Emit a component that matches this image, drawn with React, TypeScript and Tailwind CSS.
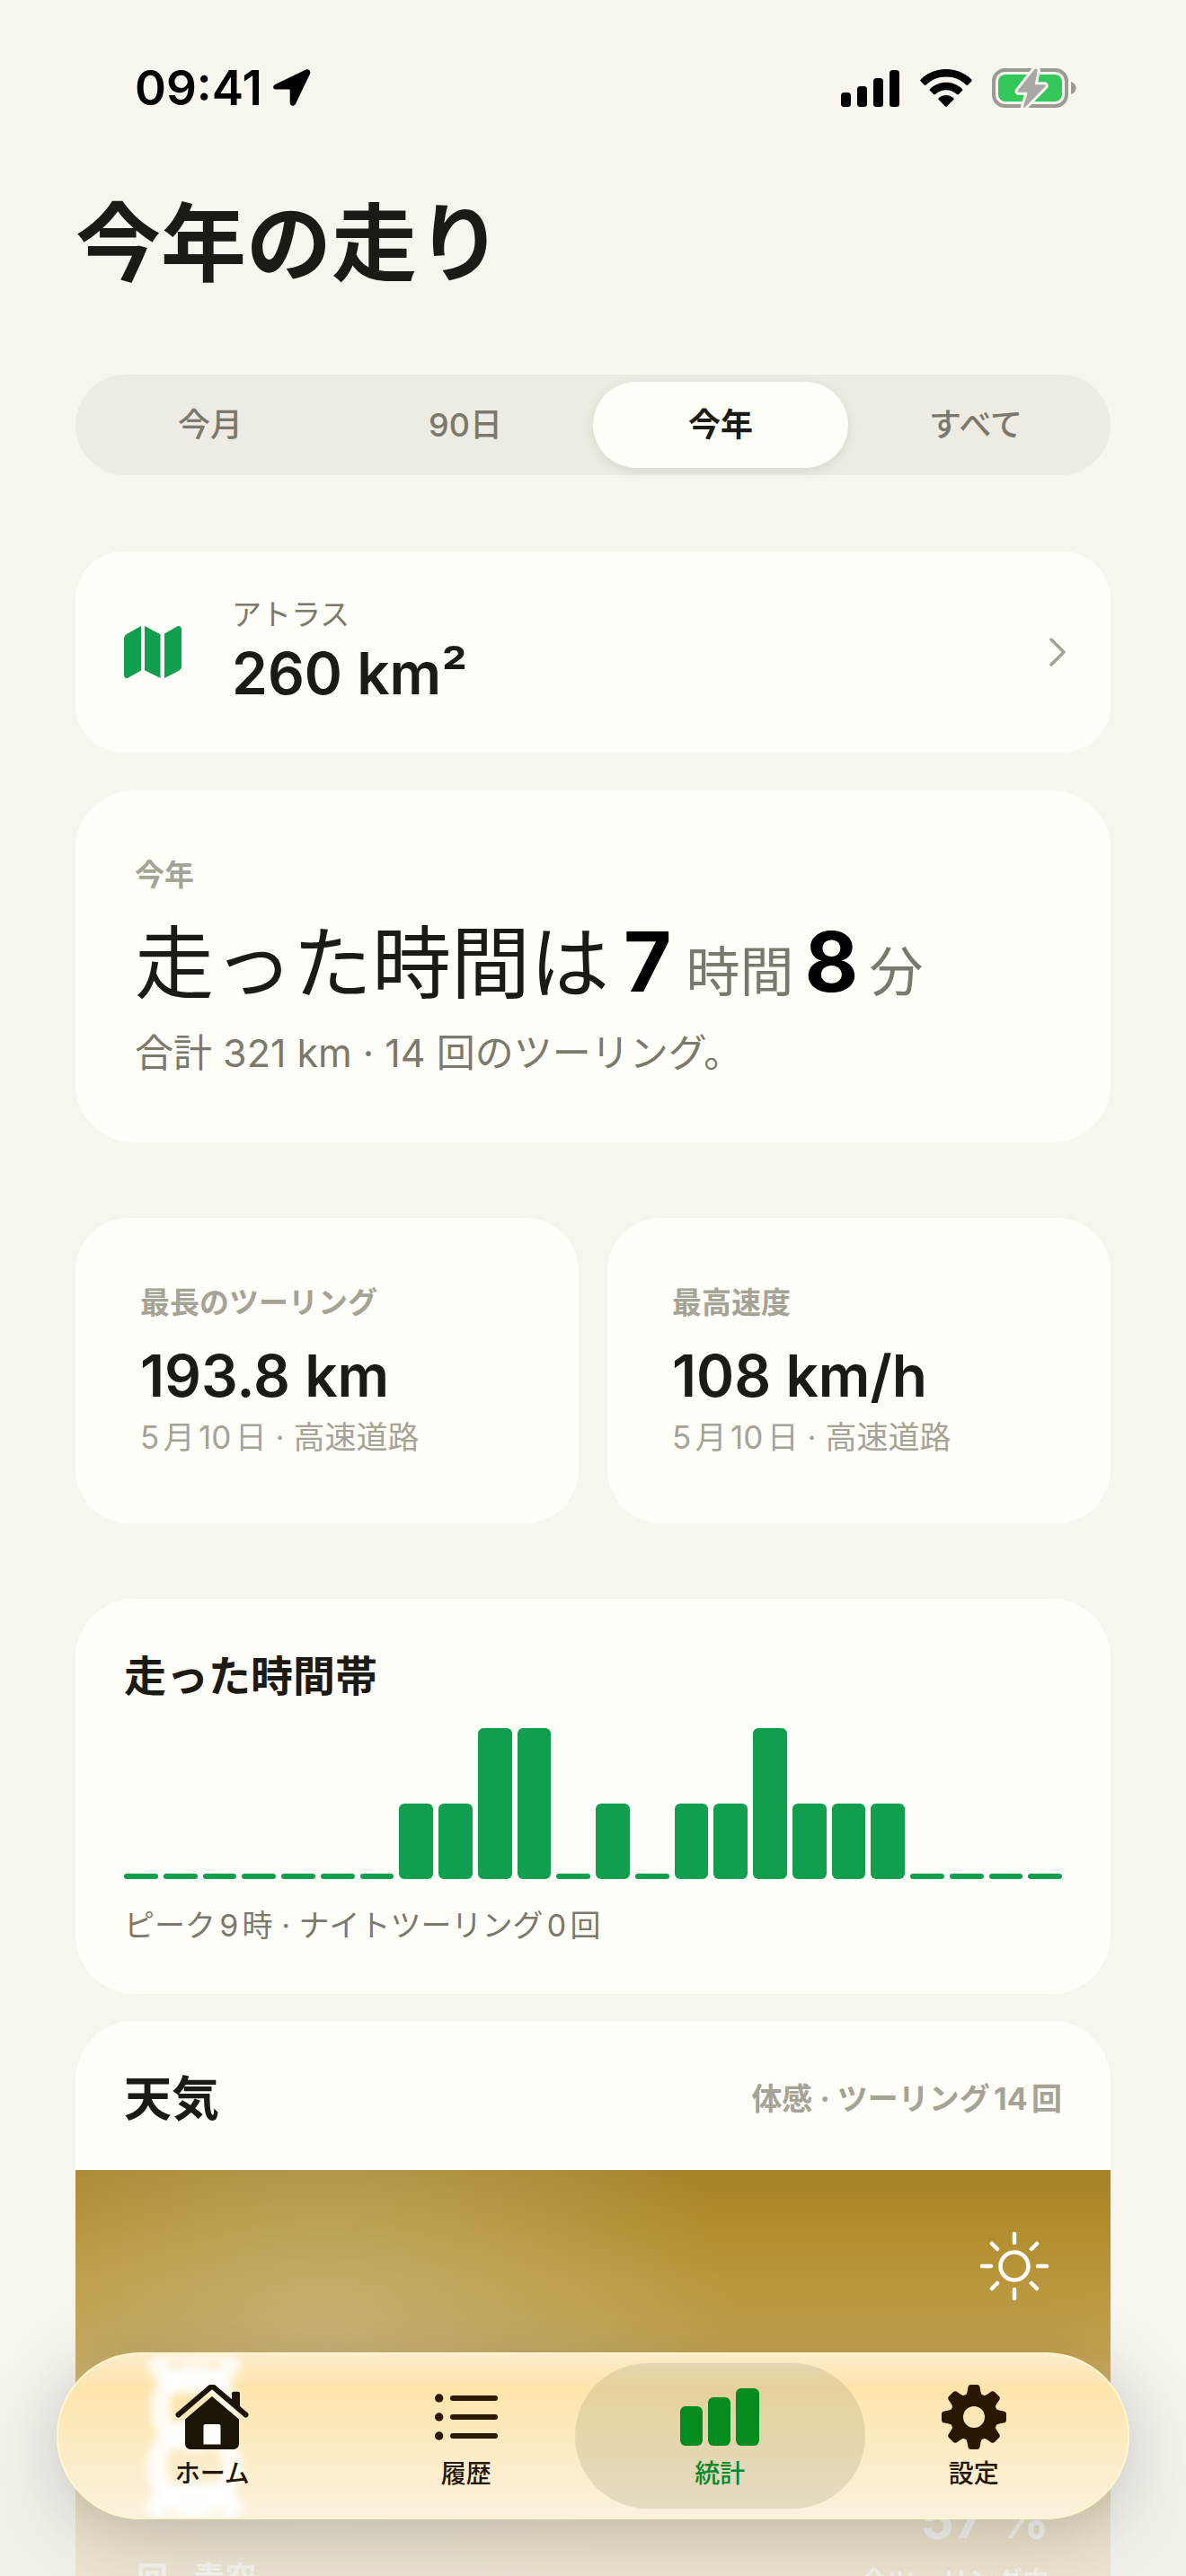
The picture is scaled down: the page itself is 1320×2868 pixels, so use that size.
import { useState, type ReactNode } from "react";

type Period = "month" | "90d" | "year" | "all";

const PERIODS: { id: Period; label: string }[] = [
  { id: "month", label: "今月" },
  { id: "90d", label: "90日" },
  { id: "year", label: "今年" },
  { id: "all", label: "すべて" },
];

// Rides started per hour of the day, 0–23.
const HOURS = [
  0, 0, 0, 0, 0, 0, 0, 1, 1, 2, 2, 0, 1, 0, 1, 1, 2, 1, 1, 1, 0, 0, 0, 0,
];

const STATS = [
  { label: "最長のツーリング", value: "193.8 km", note: "5月10日 · 高速道路" },
  { label: "最高速度", value: "108 km/h", note: "5月10日 · 高速道路" },
];

function LocationIcon() {
  return (
    <svg viewBox="0 0 42 42" className="size-[42px]" aria-hidden="true">
      <path d="M36.500.6 2.300 17C-1 18.600-.4 22.600 2.800 22.600h14.800c.8 0 1.100.4 1.100 1.100v13.800c0 3.600 4.600 4.400 6.200 1.200L41 5.200C42.400 2.200 39.600-.8 36.500.6Z" />
    </svg>
  );
}

function SignalIcon() {
  return (
    <svg viewBox="0 0 66 42" className="h-[42px] w-[66px]" aria-hidden="true">
      <rect x="0" y="26" width="11" height="16" rx="3.5" />
      <rect x="18" y="19" width="11" height="23" rx="3.5" />
      <rect x="36" y="10" width="11" height="32" rx="3.5" />
      <rect x="54" y="1" width="11" height="41" rx="3.5" />
    </svg>
  );
}

function WifiIcon() {
  return (
    <svg viewBox="0 0 58 42" className="h-[42px] w-[58px]" aria-hidden="true">
      <path d="M29 0C18 0 8 4.3.8 11.4c-.7.7-.7 1.500 0 2.200l3.800 3.900c.6.6 1.500.6 2.100 0C12.600 11.900 20.400 8.600 29 8.600s16.400 3.300 22.300 8.900c.6.6 1.500.6 2.100 0l3.800-3.900c.7-.7.7-1.500 0-2.200C50 4.300 40 0 29 0Z" />
      <path d="M29 14.800c-6.900 0-13.200 2.700-17.900 7.100-.7.6-.7 1.500 0 2.100l3.900 3.900c.6.6 1.400.6 2 .1 3.200-2.900 7.400-4.700 12-4.700s8.800 1.800 12 4.700c.6.5 1.400.5 2-.1l3.900-3.900c.7-.6.7-1.500 0-2.100-4.700-4.400-11-7.100-17.900-7.100Z" />
      <path d="M29 29c-3.100 0-5.900 1.100-8.100 2.900-.7.6-.7 1.400-.1 2l7.100 7.300c.6.7 1.600.7 2.200 0l7.100-7.300c.6-.6.6-1.400-.1-2C34.900 30.100 32.100 29 29 29Z" />
    </svg>
  );
}

function BatteryIcon() {
  return (
    <svg viewBox="0 -2 94 48" className="h-12 w-[94px]" aria-hidden="true">
      <rect
        x="2"
        y="2"
        width="81"
        height="40"
        rx="12.5"
        fill="none"
        stroke="#9c9892"
        strokeWidth="4"
      />
      <rect x="7" y="7" width="71" height="30" rx="8" fill="#34c759" />
      <path d="M88 15c3.200.8 5.500 3.800 5.500 7s-2.300 6.200-5.500 7Z" fill="#9c9892" />
      <path
        d="M47.500 1 28.800 24.800c-.7.9-.2 1.900.9 1.900h10.100L35 42.600c-.3 1.200.9 1.700 1.700.8L59.400 20.300c.8-.9.3-2-.9-2H47.700l3.100-15.900C51 1 48.700-.5 47.500 1Z"
        fill="#aaa8a4"
        stroke="#f8f5ee"
        strokeWidth="6"
        strokeLinejoin="round"
        paintOrder="stroke"
      />
    </svg>
  );
}

function MapIcon() {
  return (
    <svg viewBox="0 0 64 58" className="h-[58px] w-16 shrink-0" fill="#119e4e" aria-hidden="true">
      <path d="M19 0v49.500L5 57.600C2.500 59 0 57.500 0 54.700V14c0-2.200 1-3.900 2.900-5L19 0Z" />
      <path d="m23 0 17.500 9.300V58L23 49.300Z" />
      <path d="M45 8.500 59 .6c2.700-1.500 5 .2 5 3V45c0 2.200-1 3.700-2.900 4.700L45 58Z" />
    </svg>
  );
}

function ChevronIcon() {
  return (
    <svg viewBox="0 0 18 32" className="h-8 w-[18px]" fill="none" aria-hidden="true">
      <path
        d="m2 2 14 14L2 30"
        stroke="#a5a296"
        strokeWidth="3.5"
        strokeLinecap="round"
        strokeLinejoin="round"
      />
    </svg>
  );
}

function SunIcon() {
  return (
    <svg
      viewBox="-39 -39 78 78"
      className="size-[78px]"
      fill="none"
      stroke="#fff"
      strokeWidth="4.5"
      strokeLinecap="round"
      aria-hidden="true"
    >
      <circle r="15.5" />
      <path d="M0-36v10M0 36V26M36 0H26M-36 0h10M25-25l-6 6M25 25l-6-6M-25 25l6-6M-25-25l6 6" />
    </svg>
  );
}

function HomeIcon() {
  return (
    <svg viewBox="0 0 82 72" className="h-[72px] w-[82px]" fill="#1b1508" aria-hidden="true">
      <path
        d="M3.500 33.500 38.800 3.200c1.300-1.100 3.100-1.100 4.400 0l35.300 30.300"
        fill="none"
        stroke="#1b1508"
        strokeWidth="6"
        strokeLinecap="round"
        strokeLinejoin="round"
      />
      <path d="M63 10c0-1.500.8-2.300 2.300-2.300h4.400c1.500 0 2.300.8 2.300 2.300v19l-9-8Z" />
      <path
        fillRule="evenodd"
        d="M41 13 71 38.500V65c0 4.500-2.500 7-7 7H18c-4.500 0-7-2.500-7-7V38.500L41 13ZM33.500 44c-1.200 0-2 .8-2 2v20.500h19V46c0-1.200-.8-2-2-2h-15Z"
      />
    </svg>
  );
}

function ListIcon() {
  return (
    <svg viewBox="0 0 70 52" className="h-[52px] w-[70px]" fill="#2c1900" aria-hidden="true">
      {[5, 26, 47].map((y) => (
        <g key={y}>
          <circle cx="4.7" cy={y} r="4.7" />
          <rect x="17" y={y - 3} width="53" height="6" rx="3" />
        </g>
      ))}
    </svg>
  );
}

function BarsIcon() {
  return (
    <svg viewBox="0 0 88 64" className="h-16 w-[88px]" fill="#058c1e" aria-hidden="true">
      <rect x="0" y="20" width="25" height="44" rx="6" />
      <rect x="31" y="10" width="25" height="54" rx="6" />
      <rect x="62" y="0" width="26" height="64" rx="6" />
    </svg>
  );
}

function GearIcon() {
  return (
    <svg viewBox="-36 -36 72 72" className="size-[72px]" fill="#2a1700" aria-hidden="true">
      <defs>
        <mask id="gear-hole">
          <rect x="-36" y="-36" width="72" height="72" fill="#fff" />
          <circle r="12" fill="#000" />
        </mask>
      </defs>
      <g mask="url(#gear-hole)">
        <circle r="26.5" />
        {[0, 45, 90, 135, 180, 225, 270, 315].map((deg) => (
          <path
            key={deg}
            transform={`rotate(${deg})`}
            d="M-10.500-23c2-1.500 3-4 3.500-7.500l.4-2.500c.3-2 1.400-3 3.400-3h6.400c2 0 3.100 1 3.400 3l.4 2.500c.5 3.500 1.500 6 3.500 7.500Z"
          />
        ))}
      </g>
    </svg>
  );
}

/** Light caught in the glass of the tab bar, from the numeral underneath. */
function GlassGlow() {
  return (
    <svg
      viewBox="0 0 140 186"
      className="absolute top-0 left-[80px] h-[186px] w-[140px] blur-[4px]"
      fill="none"
      stroke="#fff"
      strokeWidth="22"
      strokeOpacity="0.85"
      aria-hidden="true"
    >
      <path d="M30 6c2 20 20 28 41 28s39-8 41-28" />
      <circle cx="71" cy="60" r="38" />
      <circle cx="71" cy="126" r="42" />
      <path d="M26 178c4-18 22-24 45-24s42 6 46 24" />
      <path d="M26 5h92M24 181h96" strokeWidth="6" />
    </svg>
  );
}

function Card({ className, children }: { className: string; children: ReactNode }) {
  return <section className={`bg-[#fffef9] ${className}`}>{children}</section>;
}

function StatusBar() {
  return (
    <div className="flex h-[132px] items-center justify-between pt-16 pr-[122px] pl-[150px]">
      <div className="flex items-center gap-3">
        <span className="text-[53px] leading-[68px] font-semibold text-black">09:41</span>
        <LocationIcon />
      </div>
      <div className="flex items-center gap-[22px]">
        <SignalIcon />
        <WifiIcon />
        <BatteryIcon />
      </div>
    </div>
  );
}

function PeriodPicker() {
  const [period, setPeriod] = useState<Period>("year");
  return (
    <div className="mt-[85px] grid grid-cols-4 rounded-full bg-[#eeebe3] p-2">
      {PERIODS.map(({ id, label }) => (
        <button
          key={id}
          type="button"
          aria-pressed={period === id}
          onClick={() => setPeriod(id)}
          className={`h-24 rounded-full text-[36px] ${
            period === id
              ? "bg-[#fffef9] font-bold text-[#1b1a15] shadow-[0_3px_12px_rgba(60,60,30,0.12)]"
              : "font-medium text-[#7b786d]"
          }`}
        >
          {label}
        </button>
      ))}
    </div>
  );
}

function AtlasLink() {
  return (
    <a
      href="#atlas"
      className="mt-[85px] flex items-center gap-14 rounded-[54px] bg-[#fffef9] py-12 pr-[50px] pl-[54px]"
    >
      <MapIcon />
      <span className="flex-1">
        <span className="block text-[33px] leading-[44px] text-[#7b786d]">アトラス</span>
        <span className="mt-1 block text-[64px] leading-[80px] font-semibold">260 km²</span>
      </span>
      <ChevronIcon />
    </a>
  );
}

function Summary() {
  return (
    <Card className="mt-[42px] rounded-[66px] px-[66px] pt-[72px] pb-[70px]">
      <p className="text-[33px] leading-[44px] font-bold text-[#a5a296]">今年</p>
      <p className="mt-5 flex h-[110px] items-baseline text-[88px] leading-[110px]">
        <span>走った時間は</span>
        <b className="ml-4 text-[92px] font-bold text-black">7</b>
        <span className="ml-4 text-[60px] text-[#7b786d]">時間</span>
        <b className="ml-3 text-[92px] font-bold text-black">8</b>
        <span className="ml-3 text-[60px] text-[#7b786d]">分</span>
      </p>
      <p className="mt-4 text-[43px] leading-[60px] text-[#7b786d]">
        合計 321 km · 14 回のツーリング。
      </p>
    </Card>
  );
}

function HourChart() {
  const peak = Math.max(...HOURS);
  return (
    <Card className="mt-[84px] rounded-[66px] px-[54px] pt-14 pb-[54px]">
      <h2 className="text-[47px] leading-[60px] font-bold">走った時間帯</h2>
      <div className="mt-7 flex h-[168px] items-end gap-[6px]">
        {HOURS.map((count, hour) => (
          <div
            key={hour}
            className="min-h-[6px] flex-1 rounded-[6px] bg-[#119e4e]"
            style={{ height: `${(count / peak) * 100}%` }}
          />
        ))}
      </div>
      <p className="mt-[30px] text-[34px] leading-[44px] text-[#7b786d] [text-autospace:normal]">
        ピーク9時 · ナイトツーリング0回
      </p>
    </Card>
  );
}

function Weather() {
  return (
    <Card className="mt-[30px] overflow-hidden rounded-[66px]">
      <div className="flex items-center justify-between px-[54px] pt-[52px] pb-11">
        <h2 className="text-[53px] leading-[70px] font-bold">天気</h2>
        <p className="text-[34px] leading-[44px] font-bold text-[#a5a296] [text-autospace:normal]">
          体感 · ツーリング14回
        </p>
      </div>
      <div className="bg-[radial-gradient(ellipse_460px_480px_at_24%_36%,rgba(214,206,172,0.45),rgba(214,206,172,0)),linear-gradient(to_bottom,#a68228,#b08c2c_60px,#c6a450_210px,#d8bc78_420px,#e0c890)] px-[68px] pt-[68px] pb-24 text-white">
        <div className="flex justify-end">
          <SunIcon />
        </div>
        <div className="mt-[203px] flex items-end justify-between">
          <p className="text-[35px] leading-[50px] font-bold">回 · 青空</p>
          <div className="text-right">
            <p className="text-[58px] leading-[80px] font-bold">57 %</p>
            <p className="mt-[6px] text-[30px] leading-[44px] font-medium">全ツーリング中</p>
          </div>
        </div>
      </div>
    </Card>
  );
}

function Tab({ label, icon, active = false }: { label: string; icon: ReactNode; active?: boolean }) {
  return (
    <a
      href="#tab"
      aria-current={active ? "page" : undefined}
      className={`relative -mx-5 flex h-[162px] flex-1 flex-col items-center rounded-full pt-6 text-[28px] leading-9 font-medium ${
        active ? "bg-[#5f5a3a]/14 text-[#008a2c]" : "text-[#231705]"
      }`}
    >
      <span className="flex h-[72px] items-center">{icon}</span>
      <span className="mt-[9px]">{label}</span>
    </a>
  );
}

function TabBar() {
  return (
    <nav className="absolute inset-x-[63px] bottom-[63px] flex items-center overflow-hidden rounded-full border-2 border-[#fff6cf] bg-linear-to-b from-[#fdeccb] via-[#fde5ab] via-20% to-[#fbf1dd] px-[30px] py-[10px]">
      <GlassGlow />
      <Tab label="ホーム" icon={<HomeIcon />} />
      <Tab label="履歴" icon={<ListIcon />} />
      <Tab label="統計" icon={<BarsIcon />} active />
      <Tab label="設定" icon={<GearIcon />} />
    </nav>
  );
}

export default function App() {
  return (
    <div className="relative h-screen overflow-hidden bg-[#f8f5ee] font-['Inter','Noto_Sans_CJK_JP',sans-serif] text-[#1b1a15]">
      <StatusBar />
      <main className="px-[84px]">
        <h1 className="mt-20 text-[95px] leading-[120px] font-bold">今年の走り</h1>
        <PeriodPicker />
        <AtlasLink />
        <Summary />
        <div className="mt-[84px] grid grid-cols-2 gap-8">
          {STATS.map((stat) => (
            <Card key={stat.label} className="rounded-[60px] px-[72px] pt-[72px] pb-[72px]">
              <p className="text-[33px] leading-[44px] font-bold text-[#a5a296]">{stat.label}</p>
              <p className="mt-5 text-[64px] leading-[80px] font-semibold">{stat.value}</p>
              <p className="mt-1 text-[35px] leading-[48px] text-[#a5a296] [text-autospace:normal]">
                {stat.note}
              </p>
            </Card>
          ))}
        </div>
        <HourChart />
        <Weather />
      </main>
      {/* content fades out under the floating tab bar */}
      <div className="pointer-events-none absolute inset-x-0 bottom-0 h-[250px] bg-linear-to-b from-[#f4f1ea]/0 via-[#f2efe8]/72 via-75% to-[#f2efe8]/78" />
      <div className="pointer-events-none absolute inset-x-[63px] bottom-[63px] h-[186px] rounded-full shadow-[0_12px_80px_rgba(45,50,60,0.25)]" />
      <TabBar />
    </div>
  );
}
